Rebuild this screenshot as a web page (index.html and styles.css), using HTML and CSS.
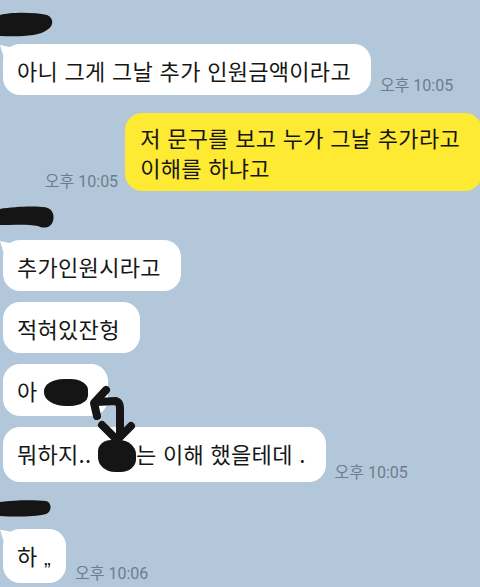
FILE: index.html
```html
<!DOCTYPE html>
<html lang="ko">
<head>
    <meta charset="UTF-8">
    <meta name="viewport" content="width=device-width, initial-scale=1.0">
    <title>채팅</title>
    <link rel="stylesheet" href="styles.css">
</head>
<body>
    <div class="chat">
        <!-- first sender, name scribbled out -->
        <div class="sender s1">
            <svg width="56" height="26" viewBox="0 0 56 26">
                <path d="M0 3 C10 0 34 0 47 3 C54 6 54 14 47 18 C40 24 20 25 0 24 Z" fill="#151515"/>
            </svg>
        </div>
        <div class="row">
            <div class="bubble first">아니 그게 그날 추가 인원금액이라고</div>
            <span class="time">오후 10:05</span>
        </div>

        <div class="row mine">
            <span class="time">오후 10:05</span>
            <div class="bubble yellow">저 문구를 보고 누가 그날 추가라고<br>이해를 하냐고</div>
        </div>

        <div class="sender s2">
            <svg width="56" height="23" viewBox="0 0 56 23">
                <path d="M0 3 C12 1 30 0 42 1 C52 1 55 8 53 15 C51 22 44 23 38 20 C28 18 12 19 0 19 Z" fill="#151515"/>
            </svg>
        </div>
        <div class="row">
            <div class="bubble first">추가인원시라고</div>
        </div>
        <div class="row">
            <div class="bubble">적혀있잔헝</div>
        </div>
        <div class="row">
            <div class="bubble">아 <span class="blot b1"></span></div>
        </div>
        <div class="row">
            <div class="bubble">뭐하지.. <span class="blot b2"></span>는 이해 했을테데 .</div>
            <span class="time">오후 10:05</span>
        </div>

        <div class="sender s3">
            <svg width="56" height="18" viewBox="0 0 56 18">
                <path d="M0 2 C14 0 36 0 46 1 C52 2 52 12 46 14 C34 17 14 17 0 16 Z" fill="#151515"/>
            </svg>
        </div>
        <div class="row">
            <div class="bubble first short">하 <span class="quote">„</span></div>
            <span class="time">오후 10:06</span>
        </div>

        <!-- hand drawn arrow over the bubbles -->
        <svg class="scribble" width="480" height="587" viewBox="0 0 480 587">
            <g fill="none" stroke="#151515" stroke-width="8" stroke-linecap="round" stroke-linejoin="round">
                <path d="M106 378 L94 391 L97 404"/>
                <path d="M96 390 L116 389 C119 390 120 393 120 396 L120 422"/>
                <path d="M102 413 L117 428 L131 414"/>
            </g>
        </svg>
    </div>
</body>
</html>
```

FILE: styles.css
```css
body {
    margin: 0;
    padding: 0;
    background: #b2c7da;
    font-family: 'Noto Sans CJK KR', 'Noto Sans', sans-serif;
    color: #161616;
    overflow: hidden;
}

.chat {
    position: relative;
    width: 480px;
    height: 587px;
}

.sender {
    line-height: 0;
}

.sender svg {
    display: block;
}

.s1 {
    margin-top: 12px;
    margin-bottom: 6px;
}

.s2 {
    margin-top: 15px;
    margin-bottom: 11px;
}

.s3 {
    margin-top: 18px;
    margin-bottom: 11px;
}

.row {
    display: flex;
    align-items: flex-end;
    gap: 9px;
    padding-left: 3px;
    margin-bottom: 11px;
}

.row.mine {
    justify-content: flex-end;
    margin-top: 18px;
    margin-right: -2px;
    gap: 7px;
}

.bubble {
    position: relative;
    background: #ffffff;
    border-radius: 17px;
    padding: 11px 20px 10px 14px;
    font-size: 22px;
    line-height: 30px;
    letter-spacing: 0.3px;
    white-space: nowrap;
}

.bubble.first::before {
    content: "";
    position: absolute;
    left: -3px;
    top: 1px;
    width: 12px;
    height: 12px;
    background: #ffffff;
    clip-path: polygon(0 0, 100% 20%, 100% 100%, 30% 100%);
}

.bubble.short {
    padding-right: 15px;
}

.quote {
    font-family: 'Liberation Sans', sans-serif;
    font-size: 20px;
}

.bubble.yellow {
    background: #fee933;
    padding: 9px 22px 9px 15px;
}

.time {
    font-family: 'Roboto', 'Noto Sans CJK KR', sans-serif;
    font-size: 16px;
    line-height: 16px;
    color: #6e7d8c;
    margin-bottom: 1px;
    white-space: nowrap;
}

.blot {
    display: inline-block;
    background: #151515;
    vertical-align: middle;
}

.b1 {
    width: 44px;
    height: 27px;
    border-radius: 45% 40% 40% 50%;
    margin-top: -4px;
}

.b2 {
    width: 38px;
    height: 32px;
    border-radius: 35% 45% 40% 45%;
    margin-top: -2px;
}

.scribble {
    position: absolute;
    top: 0;
    left: 0;
    pointer-events: none;
}
```
